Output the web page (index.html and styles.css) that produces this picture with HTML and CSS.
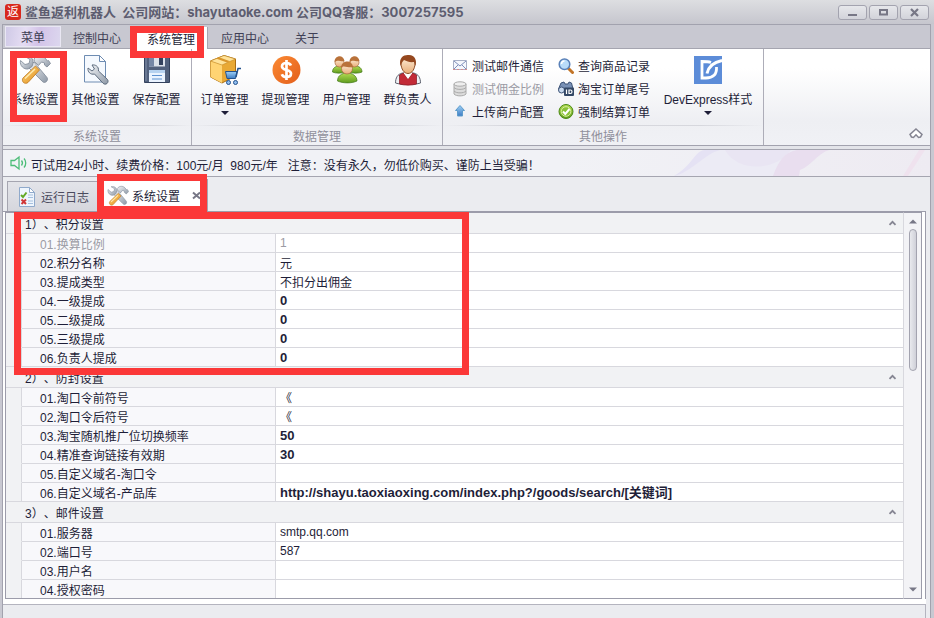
FILE: index.html
```html
<!DOCTYPE html>
<html lang="zh-CN">
<head>
<meta charset="utf-8">
<title>鲨鱼返利机器人</title>
<link rel="stylesheet" href="styles.css">
</head>
<body>
<svg class="defs" aria-hidden="true">
  <defs>
    <linearGradient id="steel" x1="0" y1="0" x2="1" y2="1"><stop offset="0" stop-color="#f4f6f8"/><stop offset="1" stop-color="#8d98a6"/></linearGradient>
    <linearGradient id="amber" x1="0" y1="0" x2="1" y2="1"><stop offset="0" stop-color="#ffd978"/><stop offset="1" stop-color="#e08a1c"/></linearGradient>
    <linearGradient id="sky" x1="0" y1="0" x2="0" y2="1"><stop offset="0" stop-color="#9fd0f5"/><stop offset="1" stop-color="#3c7cc4"/></linearGradient>
    <linearGradient id="lime" x1="0" y1="0" x2="0" y2="1"><stop offset="0" stop-color="#b4dc52"/><stop offset="1" stop-color="#5f9c1e"/></linearGradient>
    <linearGradient id="coin" x1="0" y1="0" x2="1" y2="1"><stop offset="0" stop-color="#fb8a33"/><stop offset="1" stop-color="#e35f1c"/></linearGradient>
    <linearGradient id="skin" x1="0" y1="0" x2="0" y2="1"><stop offset="0" stop-color="#fff0dc"/><stop offset="1" stop-color="#e8ad78"/></linearGradient>
    <symbol id="tools" viewBox="0 0 32 32">
      <path d="M12 11l3-3 13 15.500c1 1.500.5 3-.7 4.200-1.300 1-2.800 1-4-.3L10 14z" fill="url(#steel)" stroke="#7d8896" stroke-width=".8"/>
      <path d="M6 2.500c5-1 9 2 8 7l-1 3-4 2.500c-4 .5-8.500-3-7.500-8.500l4.500 4 4-1 1-4z" fill="url(#steel)" stroke="#7d8896" stroke-width=".8"/>
      <path d="M15 5c3-4 8-4 11-1l2.500 3 1-.5 2 3-3.500 3.500-2.500-2v-2l-3-1-3 3.500-4-4z" fill="url(#steel)" stroke="#7d8896" stroke-width=".8"/>
      <path d="M4 24L16.500 12l4 4L9 28.500c-1.500 1.200-3.500 1-4.500 0-1.200-1.200-1.500-3-.5-4.500z" fill="url(#amber)" stroke="#bd7720" stroke-width=".8"/>
      <path d="M6 24.500l10-9.500" stroke="#ffebb1" stroke-width="1.500"/>
    </symbol>
    <symbol id="up" viewBox="0 0 8 6"><path d="M1 4.800L4 1.800l3 3" fill="none" stroke="#858592" stroke-width="1.800"/></symbol>
  </defs>
</svg>

<div class="window">
  <header class="titlebar">
    <span class="logo">返</span>
    <h1>鲨鱼返利机器人  公司网站：shayutaoke.com 公司QQ客服：3007257595</h1>
    <div class="winbtns">
      <button type="button" aria-label="最小化"><svg width="11" height="9"><path d="M1 7h9" stroke="#777786" stroke-width="2"/></svg></button>
      <button type="button" aria-label="最大化"><svg width="11" height="9"><path d="M2 2h7v4.500H2z" fill="none" stroke="#777786" stroke-width="2"/></svg></button>
      <button type="button" aria-label="关闭"><svg width="11" height="9"><path d="M2 1l7 7M9 1L2 8" stroke="#777786" stroke-width="2.200"/></svg></button>
    </div>
  </header>

  <div class="client">
    <nav class="tabs">
      <button type="button" class="menu">菜单</button>
      <button type="button" class="tab">控制中心</button>
      <button type="button" class="tab active">系统管理<span class="mark mark-tab"></span></button>
      <button type="button" class="tab">应用中心</button>
      <button type="button" class="tab">关于</button>
    </nav>

    <div class="ribbon">
      <section class="group">
        <div class="items first">
          <button type="button" class="big"><svg width="32" height="32"><use href="#tools"/></svg><span>系统设置</span><i class="mark mark-big"></i></button>
          <button type="button" class="big"><svg width="32" height="32" viewBox="0 0 32 32"><path d="M4.500 1.500h15l6 6v20.500h-21z" fill="#f5f9fe" stroke="#6e8cb2"/><path d="M19.500 1.500v6h6z" fill="#fff" stroke="#6e8cb2"/><path d="M12 11c3-.5 7 1 6.500 6l9 8.500c1 1.500.5 3-.5 4-1.200 1-3 .8-4-.3L14.500 20c-4 1-7-2-6.500-6l4 3 2.500-2z" fill="url(#steel)" stroke="#5d6b7d"/></svg><span>其他设置</span></button>
          <button type="button" class="big"><svg width="32" height="32" viewBox="0 0 32 32"><path d="M3.500 2.500h24l1 1v25h-25z" fill="#52617d" stroke="#34425e"/><path d="M8 2.500h16v10H8z" fill="#dbe1ea"/><path d="M8 2.500h5v10H8z" fill="#7587a6"/><path d="M18 4h4v7h-4z" fill="#34425e"/><path d="M8 16h16v12H8z" fill="#eaf3ff"/><path d="M8 16h16v3H8z" fill="#b6d2f0"/><path d="M11 21.500h10M11 25h10" stroke="#5d91cf"/><path d="M5 4v23" stroke="#8292ad"/></svg><span>保存配置</span></button>
        </div>
        <h2>系统设置</h2>
      </section>

      <section class="group">
        <div class="items">
          <button type="button" class="big"><svg width="32" height="32" viewBox="0 0 32 32"><path d="M1.500 7L15 1.500 26.500 5v17L13 29 1.500 23z" fill="#e9a935" stroke="#a96e14"/><path d="M1.500 7L13 11v18L1.500 23z" fill="#ffd473"/><path d="M1.500 7L15 1.500 26.500 5 13 11z" fill="#ffe39a" stroke="#c18825" stroke-width=".6"/><path d="M7 4.500l11 4 3-1.300-11-4z" fill="#d9962c"/><path d="M16.500 17.500h11.500l-1.500 7h-8.500z" fill="url(#sky)" stroke="#24528c"/><path d="M27 23l2-8.500h3" fill="none" stroke="#24528c" stroke-width="1.500"/><circle cx="19.500" cy="28.500" r="2" fill="#8fbdf0" stroke="#24528c"/><circle cx="26.500" cy="28.500" r="2" fill="#8fbdf0" stroke="#24528c"/></svg><span>订单管理</span><i class="drop"></i></button>
          <button type="button" class="big"><svg width="32" height="32" viewBox="0 0 32 32"><circle cx="16.500" cy="16" r="14" fill="url(#coin)"/><path d="M21 11.500c-1-2-2.500-2.500-4.500-2.500-2.500 0-4.500 1.200-4.500 3.500 0 4.500 9 2.500 9 7 0 2.300-2 3.500-4.500 3.500-2.300 0-4-.8-4.700-2.800M16.500 6v20" fill="none" stroke="#fff" stroke-width="2.700"/></svg><span>提现管理</span></button>
          <button type="button" class="big"><svg width="32" height="32" viewBox="0 0 32 32"><g stroke="#3f7717" stroke-width=".7" fill="url(#lime)"><path d="M1.500 18c0-4 3-6 7-6s6 2 6 6c-4 1.500-10 1.500-13 0zM18 18c0-4 2-6 6-6s7 2 7 6c-3 1.500-10 1.500-13 0z"/></g><g fill="url(#skin)" stroke="#a6673a" stroke-width=".7"><circle cx="8.500" cy="8.500" r="4.500"/><circle cx="23.500" cy="8.500" r="4.500"/></g><path d="M3.500 8c0-7 9-8 10-1-3 1-6-1-8 0zM18.500 8c0-7 9-8 10-1-3 1-6-1-8 0z" fill="#b9723a"/><path d="M6.500 27c0-5 4-8 9.500-8s10 3 10 8c-5 2.500-14 2.500-19.500 0z" fill="url(#lime)" stroke="#3f7717" stroke-width=".7"/><circle cx="16" cy="14.500" r="5.500" fill="url(#skin)" stroke="#a6673a" stroke-width=".7"/><path d="M10 14c0-8 11-9 12-1-4 1-7-1-10-.5z" fill="#b9723a"/></svg><span>用户管理</span></button>
          <button type="button" class="big"><svg width="32" height="32" viewBox="0 0 32 32"><path d="M3.500 29c0-5 2-9 7-10h11c5 1 7 5 7 10-6 2-19 2-25 0z" fill="#eef0f4" stroke="#5f6470"/><path d="M7.500 30V21l4-2 4.500 6 4.500-6 4 2v9c-5 1.500-12 1.500-17 0z" fill="#c22a37" stroke="#87141f" stroke-width=".7"/><path d="M12 17h8v2.500L16 25l-4-5.500z" fill="#fff"/><path d="M9 9c0-9 14-9 14 0 0 6-3 10.500-7 10.500S9 15 9 9z" fill="url(#skin)" stroke="#8f4f27"/><path d="M8.500 12C6.500 3 12 .5 17 1c6 .5 8 5 6.500 11l-1.500-4c-4 .5-7-.5-10-2-1.500 1.500-2.500 3-3.500 6z" fill="#95481f"/></svg><span>群负责人</span></button>
        </div>
        <h2>数据管理</h2>
      </section>

      <section class="group">
        <div class="items wide">
          <div class="small-list">
            <button type="button" class="small"><svg width="16" height="16" viewBox="0 0 16 16"><path d="M1.500 2.500h13v9h-13z" fill="#f5f7fc" stroke="#a7afc6"/><path d="M2 3l6 5 6-5M2 11l4-4M14 11l-4-4" fill="none" stroke="#7f8fba"/><path d="M1 11.500h14" stroke="#d98a8a" stroke-dasharray="2 2"/></svg><span>测试邮件通信</span></button>
            <button type="button" class="small" disabled><svg width="16" height="16" viewBox="0 0 16 16"><g fill="#dcdcdc" stroke="#aaa"><path d="M2 3v10c2 2.500 10 2.500 12 0V3z"/><path d="M2 6.500c2 2.500 10 2.500 12 0M2 10c2 2.500 10 2.500 12 0" fill="none"/><ellipse cx="8" cy="3" rx="6" ry="2.200" fill="#eee"/></g></svg><span>测试佣金比例</span></button>
            <button type="button" class="small"><svg width="16" height="16" viewBox="0 0 16 16"><path d="M8 1.500l4.500 5H10.500v5.500h-5V6.500h-2z" fill="url(#sky)" stroke="#5e9ccb"/></svg><span>上传商户配置</span></button>
          </div>
          <div class="small-list">
            <button type="button" class="small"><svg width="16" height="16" viewBox="0 0 16 16"><path d="M10.500 10.500l4 4" stroke="#c27427" stroke-width="3" stroke-linecap="round"/><circle cx="6.500" cy="6.300" r="5.300" fill="#b9dcfa" stroke="#5a81b8" stroke-width="1.500"/><path d="M3.500 6c0-2 1.500-3 3-3" fill="none" stroke="#fff" stroke-width="1.500"/></svg><span>查询商品记录</span></button>
            <button type="button" class="small"><svg width="16" height="16" viewBox="0 0 16 16"><path d="M3 2l3-1 1 2h3l1-2 2.500 1 1.500 6H.500z" fill="#7890b5" stroke="#3c5276"/><circle cx="3.500" cy="9" r="3" fill="#c8d9ee" stroke="#3c5276"/><rect x="6" y="6.500" width="10" height="8.500" rx="1" fill="#334765"/><path d="M8.500 8.500v4.500M11 9v3.500h1.500c2 0 2-3.500 0-3.500z" fill="none" stroke="#fff" stroke-width="1.200"/></svg><span>淘宝订单尾号</span></button>
            <button type="button" class="small"><svg width="16" height="16" viewBox="0 0 16 16"><circle cx="8" cy="7.500" r="7" fill="url(#lime)" stroke="#4c8b16"/><circle cx="8" cy="7.500" r="4.800" fill="#8bc238" stroke="#d6f09b"/><path d="M5 7.500l2.300 2.500L11.500 5" fill="none" stroke="#fff" stroke-width="2"/></svg><span>强制结算订单</span></button>
          </div>
          <button type="button" class="big express"><svg width="32" height="32" viewBox="0 0 32 32"><path d="M2 2h28v28H2z" fill="#5c8cd8"/><path d="M19 8.500c-2-.8-4-1-9-1v16.500h4c7 0 11-3.500 10.500-11" fill="none" stroke="#fff" stroke-width="2.800"/><path d="M30 6.500C22.500 8 16.500 12.500 15 19.500" fill="none" stroke="#fff" stroke-width="3"/></svg><span>DevExpress样式</span><i class="drop"></i></button>
        </div>
        <h2>其他操作</h2>
      </section>
      <button type="button" class="collapse" aria-label="收起功能区"><svg width="14" height="11" viewBox="0 0 14 11"><path d="M7 1l6 5.500-1.500 2.500L9.500 9.500 7 6.800 4.500 9.500 2.500 9 1 6.500z" fill="#fff" stroke="#858592" stroke-width="1.500"/></svg></button>
    </div>

    <div class="notice">
      <svg width="17" height="16" viewBox="0 0 17 16"><path d="M1 5.500h3.500L9 2v12l-4.500-3.500H1z" fill="none" stroke="#4dbd78" stroke-width="1.300"/><path d="M11.500 5.500c1.200 1.500 1.200 3.500 0 5M14 3.500c2.300 2.500 2.300 6.500 0 9" fill="none" stroke="#4dbd78" stroke-width="1.300"/></svg>
      <p>可试用24小时、续费价格：100元/月  980元/年   注意：没有永久，勿低价购买、谨防上当受骗！</p>
      <svg class="ribbons" width="260" height="26" viewBox="0 0 260 26"><path d="M4 26C22 16 24 2 38 0h90c-8 4-12 26-24 26z" fill="#ecebf5"/><path d="M4 26C22 16 24 2 34 0h16C34 4 22 22 4 26z" fill="#e5e2f4"/><path d="M55 0c12 22 50 22 66 0z" fill="#e9e5f3"/><path d="M103 26c6-16 12-24 24-26h32c-12 4-18 16-29 20l-1 6z" fill="#e9deef"/><path d="M233 26l16-26h6L238 26z" fill="#efe2ee"/></svg>
    </div>

    <main class="work">
      <div class="doctabs">
        <button type="button" class="doc"><svg width="20" height="20" viewBox="0 0 20 20"><path d="M2.500.500h10l5 5v14h-15z" fill="#eef5fd" stroke="#8fa9cb"/><path d="M12.500.500v5h5z" fill="#fff" stroke="#8fa9cb"/><path d="M11 8h5M11 10.500h5M11 14h5M11 16.500h5" stroke="#a8c1df"/><path d="M4 8l2 2 3.500-4.500" fill="none" stroke="#63a825" stroke-width="2"/><path d="M4.500 12.500l4.500 4.500M9 12.500L4.500 17" stroke="#d03535" stroke-width="2"/></svg><span>运行日志</span></button>
        <button type="button" class="doc current"><svg width="22" height="22"><use href="#tools"/></svg><span>系统设置</span><svg class="x" width="9" height="9" viewBox="0 0 9 9"><path d="M1 1.500l7 6M8 1.500l-7 6" stroke="#777786" stroke-width="2"/></svg><i class="mark mark-doc"></i></button>
      </div>

      <div class="panel">
        <div class="grid">
          <table>
            <colgroup><col class="c-indent"><col class="c-name"><col></colgroup>
            <tbody>
              <tr class="cat"><th colspan="3" scope="rowgroup"><div><span>1）、积分设置</span><button type="button" aria-label="折叠"><svg width="9" height="6"><use href="#up"/></svg></button></div></th></tr>
              <tr class="off"><td></td><th scope="row">01.换算比例</th><td>1</td></tr>
              <tr><td></td><th scope="row">02.积分名称</th><td class="han">元</td></tr>
              <tr><td></td><th scope="row">03.提成类型</th><td class="han">不扣分出佣金</td></tr>
              <tr><td></td><th scope="row">04.一级提成</th><td class="set">0</td></tr>
              <tr><td></td><th scope="row">05.二级提成</th><td class="set">0</td></tr>
              <tr><td></td><th scope="row">05.三级提成</th><td class="set">0</td></tr>
              <tr><td></td><th scope="row">06.负责人提成</th><td class="set">0</td></tr>
            </tbody>
            <tbody>
              <tr class="cat"><th colspan="3" scope="rowgroup"><div><span>2）、防封设置</span><button type="button" aria-label="折叠"><svg width="9" height="6"><use href="#up"/></svg></button></div></th></tr>
              <tr><td></td><th scope="row">01.淘口令前符号</th><td class="han">《</td></tr>
              <tr><td></td><th scope="row">02.淘口令后符号</th><td class="han">《</td></tr>
              <tr><td></td><th scope="row">03.淘宝随机推广位切换频率</th><td class="set">50</td></tr>
              <tr><td></td><th scope="row">04.精准查询链接有效期</th><td class="set">30</td></tr>
              <tr><td></td><th scope="row">05.自定义域名-淘口令</th><td></td></tr>
              <tr><td></td><th scope="row">06.自定义域名-产品库</th><td class="set">http://shayu.taoxiaoxing.com/index.php?/goods/search/[关键词]</td></tr>
            </tbody>
            <tbody>
              <tr class="cat"><th colspan="3" scope="rowgroup"><div><span>3）、邮件设置</span><button type="button" aria-label="折叠"><svg width="9" height="6"><use href="#up"/></svg></button></div></th></tr>
              <tr><td></td><th scope="row">01.服务器</th><td>smtp.qq.com</td></tr>
              <tr><td></td><th scope="row">02.端口号</th><td>587</td></tr>
              <tr><td></td><th scope="row">03.用户名</th><td></td></tr>
              <tr><td></td><th scope="row">04.授权密码</th><td></td></tr>
            </tbody>
          </table>
        </div>
        <div class="scroll">
          <svg width="8" height="5"><path d="M0 4.500L4 .500l4 4z" fill="#777786"/></svg>
          <div class="thumb"></div>
          <svg class="down" width="8" height="5"><path d="M0 .500l4 4 4-4z" fill="#777786"/></svg>
        </div>
        <i class="mark mark-grid"></i>
      </div>
      <div class="under"></div>
    </main>
  </div>
</div>
</body>
</html>
```

FILE: styles.css
```css
* { box-sizing: border-box; }

body {
  margin: 0;
  color: #1e1e38;
  font: 12px/18px "Liberation Sans", "Noto Sans CJK SC", sans-serif;
  text-spacing-trim: space-all;
}

button {
  padding: 0;
  border: 0;
  background: none;
  color: inherit;
  font: inherit;
}

svg { display: block; flex: none; }

.defs { position: absolute; width: 0; height: 0; }

.window {
  display: flex;
  flex-direction: column;
  height: 100vh;
  overflow: hidden;
  background: #c8c8d1;
}

/* title bar */
.titlebar {
  display: flex;
  flex: none;
  align-items: center;
  gap: 4px;
  height: 24px;
  padding: 0 5px;
  background: linear-gradient(#dddee1, #c6c6ce);
}

.logo {
  width: 16px;
  height: 16px;
  border-radius: 3px;
  background: #d8281c;
  color: #fff;
  font-size: 12px;
  line-height: 16px;
  text-align: center;
}

h1 {
  flex: 1;
  margin: 0;
  padding-top: 1px;
  color: #5d5d70;
  font-family: Inter, "Noto Sans CJK SC", sans-serif;
  font-size: 13px;
  font-weight: 700;
  line-height: 23px;
  white-space: pre;
}

.winbtns { display: flex; gap: 2px; }

.winbtns button {
  display: grid;
  place-items: center;
  width: 29px;
  height: 15px;
  border: 1px solid #a3a3af;
  border-radius: 3px;
  background: linear-gradient(#e6e7eb, #d2d3da);
}

.client {
  display: flex;
  flex: 1;
  flex-direction: column;
  min-height: 0;
  margin: 0 3px 0 2px;
  border: solid #a2a2ae;
  border-width: 1px 1px 0;
}

/* ribbon tabs */
.tabs {
  display: flex;
  flex: none;
  align-items: flex-end;
  gap: 2px;
  height: 24px;
  padding-left: 2px;
  border-bottom: 1px solid #a5a5b0;
  background: #c8c8d1;
  color: #3f3f55;
}

.menu {
  align-self: center;
  width: 56px;
  height: 21px;
  margin-right: -2px;
  padding-top: 3px;
  border: 1px solid #e9e7f3;
  background: linear-gradient(100deg, #cfc9e6, #e5ddf3 35%, #d3c3e8 60%, #dcd7ee);
  line-height: 16px;
}

.tab {
  position: relative;
  height: 22px;
  padding: 3px 12px 0;
  line-height: 18px;
}

.tab.active {
  margin-bottom: -1px;
  background: #fff;
  box-shadow: 1px 0 #a5a5b0;
  color: #1e1e38;
}

/* ribbon body */
.ribbon {
  display: flex;
  flex: none;
  height: 97px;
  border-bottom: 1px solid #a2a2ae;
  background: linear-gradient(#fff 20%, #eeeff3 75%, #f0f1f5);
}

.group {
  display: flex;
  flex-direction: column;
  border-right: 1px solid #adadb8;
}

.items {
  display: flex;
  flex: none;
  height: 76px;
  padding: 5px 4px 0 2px;
}

.items.first { padding-left: 1px; }

.items.wide { padding: 5px 3px 0 9px; }

.group h2 {
  margin: 0;
  border-top: 1px solid #dcdde2;
  border-image: linear-gradient(90deg, transparent, #d6d7dd 20%, #d6d7dd 80%, transparent) 1;
  color: #8f8f9b;
  font-size: 12px;
  font-weight: 400;
  line-height: 22px;
  text-align: center;
}

.big {
  position: relative;
  display: flex;
  flex-direction: column;
  align-items: center;
  width: 61px;
  line-height: 22px;
  white-space: nowrap;
}

.big span { padding-top: 3px; }

.drop {
  border: solid transparent;
  border-width: 4px 4px 0;
  border-top-color: #1e1e38;
}

.small-list {
  display: flex;
  flex-direction: column;
  width: 106px;
}

.express { width: 104px; margin-left: -8px; }

.small {
  display: flex;
  align-items: center;
  gap: 4px;
  height: 23px;
  white-space: nowrap;
}

.small span { padding-top: 2px; }

.small:disabled { color: #9b9ba4; }

.collapse {
  align-self: flex-end;
  margin: 0 7px 6px auto;
}

/* announcement strip */
.notice {
  position: relative;
  display: flex;
  flex: none;
  align-items: center;
  gap: 4px;
  height: 28px;
  margin-top: 3px;
  padding-left: 7px;
  border: solid #a5a5b0;
  border-width: 1px 0;
  background: linear-gradient(90deg, #f1f2f6 60%, #eeebf2);
}

.notice::before {
  position: absolute;
  inset: -4px 0 auto;
  height: 3px;
  background: #e3e4e9;
  content: "";
}

.notice p {
  flex: 1;
  margin: 0;
  padding-top: 5px;
  white-space: pre;
}

.ribbons { position: absolute; top: 0; right: 0; }

/* documents */
.work {
  display: flex;
  flex: 1;
  flex-direction: column;
  min-height: 0;
  background: #ebecf0;
}

.doctabs {
  display: flex;
  flex: none;
  align-items: flex-end;
  height: 34px;
  padding-left: 4px;
}

.doc {
  position: relative;
  display: flex;
  align-items: center;
  gap: 4px;
  width: 91px;
  height: 30px;
  padding-left: 9px;
  border: 1px solid #a5a5b0;
  border-bottom: 0;
  background: linear-gradient(#e3e4e9, #d5d6dd);
  color: #4b4b5e;
  line-height: 20px;
  white-space: nowrap;
}

.doc span { padding-top: 2px; }

.doc.current {
  gap: 3px;
  width: 110px;
  height: 32px;
  padding-left: 8px;
  background: #fff;
  color: #1e1e38;
}

.doc .x { margin-right: 6px; margin-left: auto; }

.panel {
  position: relative;
  display: flex;
  flex: 1;
  min-height: 0;
  margin-right: 4px;
  padding: 0 3px 0 2px;
  border: solid #9c9caa;
  border-width: 1px 1px 0 0;
  background: #fff;
}

.grid {
  flex: 1;
  min-width: 0;
  overflow: hidden;
  border: 1px solid #9c9caa;
  border-right-color: #d8d8de;
}

table {
  width: 100%;
  border-spacing: 0;
  table-layout: fixed;
}

.c-indent { width: 16px; }
.c-name { width: 254px; }

td, th {
  height: 19px;
  padding: 1px 0 0;
  border-bottom: 1px solid #d8d8de;
  font-weight: 400;
  line-height: 17px;
  text-align: left;
  white-space: nowrap;
}

td:first-child {
  border-right: 1px solid #d8d8de;
  border-bottom-color: #f1f2f4;
  background: #f1f2f4;
}

tr:last-child td:first-child { border-bottom-color: #d8d8de; }

tr:not(.cat) th {
  padding-left: 18px;
  border-right: 1px solid #d8d8de;
  background: #f8f8fb;
}

tr:not(.cat) th, td.han { padding-top: 4px; line-height: 14px; }

td:last-child { padding-left: 4px; background: #fff; }

.off th, .off td { color: #9b9ba4; }

td.set { font-size: 13px; font-weight: 700; }

.cat th { height: 21px; padding: 0; background: #f1f2f4; }

.cat div {
  display: flex;
  align-items: center;
  justify-content: space-between;
  height: 20px;
  padding: 0 6px 0 19px;
}

.cat span { padding-top: 5px; }

.scroll {
  display: flex;
  flex: none;
  flex-direction: column;
  align-items: center;
  width: 18px;
  padding: 6px 0;
  border: solid #9c9caa;
  border-width: 1px 1px 1px 0;
  background: #f3f3f6;
}

.thumb {
  width: 8px;
  height: 38%;
  margin-top: 5px;
  border: 1px solid #a3a3af;
  border-radius: 4px;
  background: linear-gradient(90deg, #e9eaee, #cfd0d8);
}

.down { margin-top: auto; }

.under {
  flex: none;
  height: 19px;
  margin-right: 4px;
  border-top: 5px solid #fff;
  background: #ebecf0;
  box-shadow: inset 0 1px #b4b4bf, inset -1px 0 #b4b4bf;
}

/* highlight frames laid over the interface */
.mark {
  position: absolute;
  z-index: 2;
  border: 7px solid #fb3838;
  pointer-events: none;
}

.mark-tab { inset: -1px 3px -9px -5px; }
.mark-big { inset: -3px -2px 3px 6px; }
.mark-doc { inset: -6px 0 -2px -2px; }
.mark-grid { top: 0; left: 11px; width: 455px; height: 163px; }
```
